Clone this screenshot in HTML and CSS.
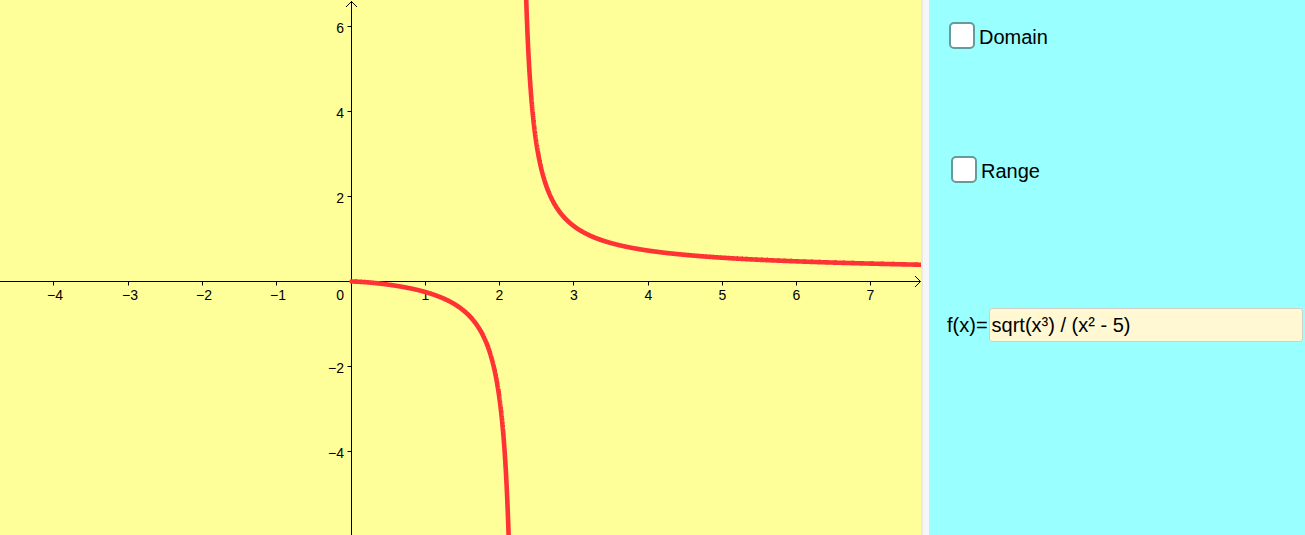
FILE: index.html
```html
<!DOCTYPE html>
<html>
<head>
<meta charset="utf-8">
<link rel="stylesheet" href="styles.css">
</head>
<body>
<div class="app">
  <div class="graph">
    <svg class="plot" width="921" height="535" viewBox="0 0 921 535">
      <g class="axes">
        <line x1="0" y1="281.5" x2="920.5" y2="281.5"/>
        <line x1="351.5" y1="1" x2="351.5" y2="535"/>
        <polyline class="arrow" points="915,276 920.5,281.5 915,287"/>
        <polyline class="arrow" points="346,7 351.5,1.5 357,7"/>
        <line x1="53.5" y1="281.5" x2="53.5" y2="285.5"/>
        <line x1="128.5" y1="281.5" x2="128.5" y2="285.5"/>
        <line x1="202.5" y1="281.5" x2="202.5" y2="285.5"/>
        <line x1="276.5" y1="281.5" x2="276.5" y2="285.5"/>
        <line x1="425.5" y1="281.5" x2="425.5" y2="285.5"/>
        <line x1="499.5" y1="281.5" x2="499.5" y2="285.5"/>
        <line x1="573.5" y1="281.5" x2="573.5" y2="285.5"/>
        <line x1="648.5" y1="281.5" x2="648.5" y2="285.5"/>
        <line x1="722.5" y1="281.5" x2="722.5" y2="285.5"/>
        <line x1="796.5" y1="281.5" x2="796.5" y2="285.5"/>
        <line x1="870.5" y1="281.5" x2="870.5" y2="285.5"/>
        <line x1="347.5" y1="26.5" x2="351.5" y2="26.5"/>
        <line x1="347.5" y1="111.5" x2="351.5" y2="111.5"/>
        <line x1="347.5" y1="196.5" x2="351.5" y2="196.5"/>
        <line x1="347.5" y1="366.5" x2="351.5" y2="366.5"/>
        <line x1="347.5" y1="451.5" x2="351.5" y2="451.5"/>
      </g>
      <g class="labels xl">
        <text x="55" y="299.5">−4</text>
        <text x="130" y="299.5">−3</text>
        <text x="204" y="299.5">−2</text>
        <text x="278" y="299.5">−1</text>
        <text x="425.5" y="299.5">1</text>
        <text x="499.5" y="299.5">2</text>
        <text x="574" y="299.5">3</text>
        <text x="648.5" y="299.5">4</text>
        <text x="722.5" y="299.5">5</text>
        <text x="796.5" y="299.5">6</text>
        <text x="870.5" y="299.5">7</text>
      </g>
      <g class="labels yl">
        <text x="344" y="299.5">0</text>
        <text x="344" y="32.5">6</text>
        <text x="344" y="117.5">4</text>
        <text x="344" y="202.5">2</text>
        <text x="344" y="372.5">−2</text>
        <text x="344" y="457.5">−4</text>
      </g>
      <path id="curve" class="curve" d=""/>
    </svg>
  </div>
  <div class="divider"></div>
  <div class="panel">
    <label class="check-row row-domain">
      <span class="box"></span>
      <span class="check-text">Domain</span>
    </label>
    <label class="check-row row-range">
      <span class="box"></span>
      <span class="check-text">Range</span>
    </label>
    <div class="func-row">
      <span class="func-label">f(x)=</span>
      <div class="func-input">sqrt(x³) / (x² - 5)</div>
    </div>
  </div>
</div>
<script src="script.js"></script>
</body>
</html>
```
FILE: styles.css
```css
html, body {
  margin: 0;
  padding: 0;
  width: 1305px;
  height: 535px;
  overflow: hidden;
  font-family: "Liberation Sans", Arial, sans-serif;
}
.app {
  display: flex;
  width: 1305px;
  height: 535px;
}
.graph {
  width: 921px;
  height: 535px;
  background: #ffff99;
  flex: none;
}
.plot {
  display: block;
}
.axes line, .axes polyline {
  stroke: #000;
  stroke-width: 1;
  fill: none;
}
.labels text {
  font-family: "Liberation Sans", Arial, sans-serif;
  font-size: 14px;
  fill: #000;
}
.xl text {
  text-anchor: middle;
}
.yl text {
  text-anchor: end;
}
.curve {
  fill: none;
  stroke: #ff3333;
  stroke-width: 4.6;
  stroke-linecap: round;
  stroke-linejoin: round;
}
.divider {
  width: 6px;
  flex: none;
  background: #f7f7f7;
  border-left: 2px solid #e9e9e9;
}
.panel {
  flex: 1;
  background: #99ffff;
  display: flex;
  flex-direction: column;
  align-items: flex-start;
}
.check-row {
  display: flex;
  align-items: flex-start;
  gap: 4px;
  font-size: 20px;
  color: #000;
}
.row-domain {
  margin-top: 22px;
  margin-left: 20px;
}
.row-range {
  margin-top: 104px;
  margin-left: 22px;
}
.box {
  width: 26px;
  height: 27px;
  box-sizing: border-box;
  border: 2px solid #679b9b;
  border-radius: 5px;
  background: #fff;
}
.check-text {
  line-height: 30px;
}
.func-row {
  margin-top: 122px;
  margin-left: 18px;
  display: flex;
  align-items: center;
  gap: 1px;
  font-size: 20px;
}
.func-label {
  line-height: 34px;
}
.func-input {
  width: 314px;
  height: 34px;
  box-sizing: border-box;
  line-height: 32px;
  padding-left: 2px;
  background: #fff8d2;
  border: 1px solid #d0d0c8;
  border-radius: 3px;
}
```
FILE: script.js
```js
(function () {
  var x0 = 351.5, y0 = 281.5, ux = 74.2, uy = 42.5;
  function f(x) { return Math.sqrt(x * x * x) / (x * x - 5); }
  function sx(x) { return x0 + x * ux; }
  function sy(y) { return y0 - y * uy; }
  var a = Math.sqrt(5);
  var d = "";
  var pts = [];
  var x;
  for (x = 0; x < a; x += 0.0005) {
    var Y = sy(f(x));
    pts.push(sx(x).toFixed(2) + "," + Y.toFixed(2));
    if (Y > 545) break;
  }
  d += "M" + pts.join(" L");
  pts = [];
  var started = false;
  for (x = a + 0.0005; x <= 7.76; x += 0.0005) {
    var Y2 = sy(f(x));
    if (Y2 < -15) { continue; }
    pts.push(sx(x).toFixed(2) + "," + Y2.toFixed(2));
  }
  d += " M" + pts.join(" L");
  document.getElementById("curve").setAttribute("d", d);
})();
```
